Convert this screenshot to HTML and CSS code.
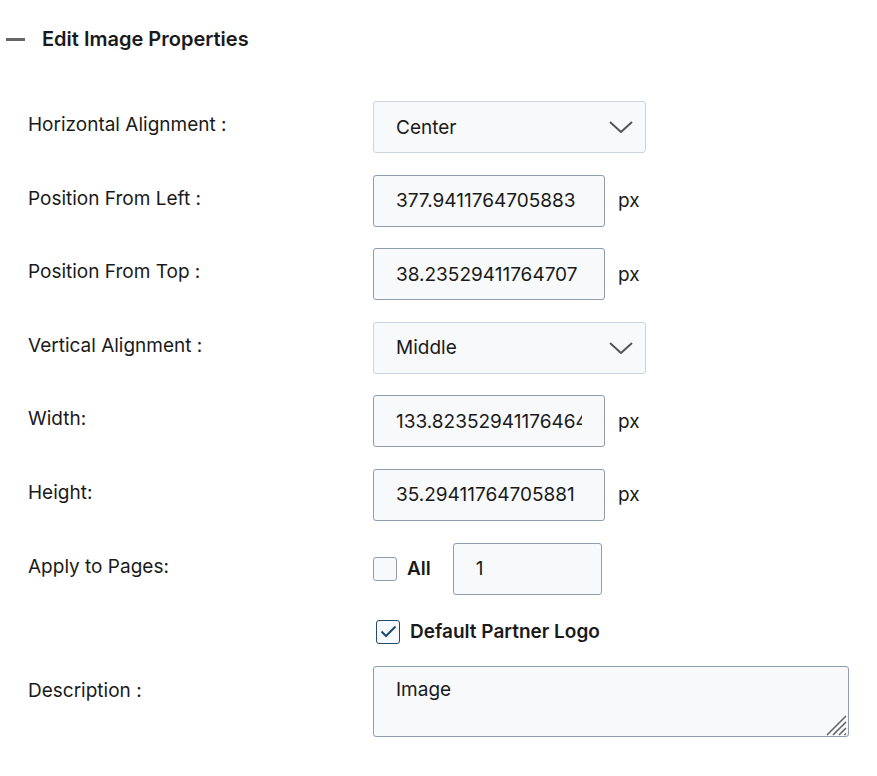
FILE: index.html
```html
<!DOCTYPE html>
<html lang="en">
<head>
  <meta charset="UTF-8">
  <title>Edit Image Properties</title>
  <meta name="viewport" content="width=device-width, initial-scale=1.0">
  <link rel="stylesheet" href="styles.css">
</head>
<body>
  <div class="panel">
    <div class="panel-header">
      <span class="collapse-icon"></span>
      <h2>Edit Image Properties</h2>
    </div>

    <div class="form">
      <div class="row">
        <label class="label">Horizontal Alignment :</label>
        <div class="control">
          <span class="select-wrap wide">
            <select class="field">
              <option>Center</option>
              <option>Left</option>
              <option>Right</option>
            </select>
            <svg class="chevron" width="24" height="12" viewBox="0 0 24 12"><path d="M1 1 L12 11 L23 1" fill="none" stroke="#555" stroke-width="2"/></svg>
          </span>
        </div>
      </div>

      <div class="row">
        <label class="label">Position From Left :</label>
        <div class="control">
          <input class="field" type="text" value="377.9411764705883">
          <span class="unit">px</span>
        </div>
      </div>

      <div class="row">
        <label class="label">Position From Top :</label>
        <div class="control">
          <input class="field" type="text" value="38.23529411764707">
          <span class="unit">px</span>
        </div>
      </div>

      <div class="row">
        <label class="label">Vertical Alignment :</label>
        <div class="control">
          <span class="select-wrap wide">
            <select class="field">
              <option>Middle</option>
              <option>Top</option>
              <option>Bottom</option>
            </select>
            <svg class="chevron" width="24" height="12" viewBox="0 0 24 12"><path d="M1 1 L12 11 L23 1" fill="none" stroke="#555" stroke-width="2"/></svg>
          </span>
        </div>
      </div>

      <div class="row">
        <label class="label">Width:</label>
        <div class="control">
          <input class="field" type="text" value="133.82352941176464">
          <span class="unit">px</span>
        </div>
      </div>

      <div class="row">
        <label class="label">Height:</label>
        <div class="control">
          <input class="field" type="text" value="35.29411764705881">
          <span class="unit">px</span>
        </div>
      </div>

      <div class="row">
        <label class="label">Apply to Pages:</label>
        <div class="control">
          <span class="checkbox"></span>
          <span class="check-text">All</span>
          <input class="field pages" type="text" value="1">
        </div>
      </div>

      <div class="row row-check">
        <div class="label"></div>
        <div class="control">
          <span class="checkbox checked">
            <svg width="17" height="13" viewBox="0 0 17 13"><path d="M1.5 6.5 L6 11 L15.5 1.5" fill="none" stroke="#1f4b6e" stroke-width="2"/></svg>
          </span>
          <span class="check-text">Default Partner Logo</span>
        </div>
      </div>

      <div class="row row-area">
        <label class="label">Description :</label>
        <div class="control">
          <span class="area-wrap">
            <textarea class="field area">Image</textarea>
            <svg class="grip" width="22" height="22" viewBox="0 0 22 22"><path d="M21 2 L2 21 M21 8 L8 21 M21 14 L14 21 M21 19.5 L19.5 21" fill="none" stroke="#666" stroke-width="1.6"/></svg>
          </span>
        </div>
      </div>
    </div>
  </div>
</body>
</html>
```

FILE: styles.css
```css
body {
  margin: 0;
  background: #fff;
  color: #1a1a1a;
  font-family: Inter, 'Noto Sans', sans-serif;
  font-size: 19px;
}

.panel-header {
  display: flex;
  align-items: center;
  gap: 17px;
  height: 24px;
  margin-top: 27px;
  padding-left: 6px;
}

.collapse-icon {
  display: block;
  width: 19px;
  height: 3px;
  background: #666;
}

.panel-header h2 {
  margin: 0;
  font-size: 20px;
  font-weight: 600;
  color: #1a1a1a;
}

.form {
  display: flex;
  flex-direction: column;
  gap: 21.6px;
  margin-top: 50px;
  padding-left: 28px;
}

.row {
  display: flex;
  align-items: flex-start;
}

.label {
  flex: none;
  width: 345px;
  padding-top: 12px;
  line-height: 24px;
}

.control {
  display: flex;
  align-items: center;
}

.field {
  box-sizing: border-box;
  width: 232px;
  height: 52px;
  padding: 0 22px;
  font-family: inherit;
  font-size: 19px;
  color: #1a1a1a;
  background: #f7f9fb;
  border: 1px solid #8f9db1;
  border-radius: 3px;
  outline: none;
}

.select-wrap {
  position: relative;
  display: block;
}

.select-wrap.wide .field {
  width: 273px;
}

select.field {
  appearance: none;
  border-color: #cbd3de;
}

.chevron {
  position: absolute;
  right: 13px;
  top: 20px;
  pointer-events: none;
}

.unit {
  margin-left: 13px;
}

.checkbox {
  box-sizing: border-box;
  display: flex;
  align-items: center;
  justify-content: center;
  width: 24px;
  height: 24px;
  background: #f7f9fb;
  border: 1px solid #8f9db1;
  border-radius: 3px;
}

.checkbox.checked {
  margin-left: 3px;
  border-color: #1f4b6e;
}

.check-text {
  margin-left: 10px;
  font-weight: 600;
}

.field.pages {
  width: 149px;
  margin-left: 22px;
}

.row-check {
  height: 24px;
  margin-top: 3.4px;
}

.row-check .label {
  padding-top: 0;
}

.area-wrap {
  position: relative;
  display: block;
}

.field.area {
  display: block;
  width: 476px;
  height: 71px;
  margin-top: 1px;
  padding: 11px 22px;
  line-height: 24px;
  resize: none;
}

.row-area .label {
  padding-top: 14px;
}

.grip {
  position: absolute;
  right: 2px;
  bottom: 1px;
  pointer-events: none;
}
```
